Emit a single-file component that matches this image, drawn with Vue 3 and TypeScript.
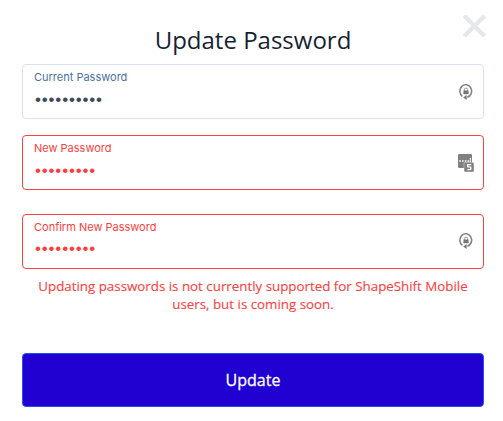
<script setup lang="ts">
interface Field {
  id: string
  label: string
  length: number
  invalid: boolean
  icon: 'lock' | 'manager'
}

const fields: Field[] = [
  { id: 'current', label: 'Current Password', length: 10, invalid: false, icon: 'lock' },
  { id: 'new', label: 'New Password', length: 9, invalid: true, icon: 'manager' },
  { id: 'confirm', label: 'Confirm New Password', length: 9, invalid: true, icon: 'lock' },
]
</script>

<template>
  <main class="dialog">
    <button class="close" aria-label="Close">
      <svg width="23" height="22" viewBox="0 0 23 22">
        <path d="M2.7 2.2 20.3 19.8M20.3 2.2 2.7 19.8" fill="none" stroke="#e6e7e9" stroke-width="4.2" stroke-linecap="square" />
      </svg>
    </button>
    <h1 class="title">Update Password</h1>
    <div v-for="f in fields" :key="f.id" class="field" :class="[f.id, { invalid: f.invalid }]">
      <div class="text">
        <span class="label">{{ f.label }}</span>
        <span class="value">{{ '•'.repeat(f.length) }}</span>
      </div>
      <svg v-if="f.icon === 'lock'" class="icon" width="18" height="18" viewBox="0 0 18 18">
        <path d="M5.4 13.4A5.9 6.4 0 1 1 10.3 14.3" fill="none" stroke="#858585" stroke-width="1.6" />
        <path d="M9.6 12v5L6.2 14.5z" fill="#777" />
        <path d="M7.4 8V6.6a1.6 1.6 0 0 1 3.2 0V8" fill="none" stroke="#999" stroke-width="1" />
        <rect x="6.4" y="7.4" width="5.2" height="3.8" rx=".4" fill="#777" />
      </svg>
      <svg v-else class="icon" width="18" height="18" viewBox="0 0 18 18">
        <rect x="1" y="0" width="14" height="14" rx="1.2" fill="#808080" />
        <path d="M2.2 7h1.6M5 7h1.6M7.8 7h1.6M10.6 7h1.4" stroke="#fff" stroke-width="1.6" />
        <path d="M13.3 4v4" stroke="#fff" stroke-width="1" />
        <rect x="7" y="8.4" width="10" height="9.6" rx="1.2" fill="#808080" stroke="#fff" stroke-width=".4" />
        <path d="M14.2 10.6h-3.5v2.2h2c1.8 0 1.8 2.9 0 2.9h-2.3" fill="none" stroke="#fff" stroke-width="1.3" />
      </svg>
    </div>
    <p class="error">Updating passwords is not currently supported for ShapeShift Mobile<br>users, but is coming soon.</p>
    <button class="submit">Update</button>
  </main>
</template>

<style>
body {
  background: #fff;
}
</style>

<style scoped>
.dialog {
  position: relative;
  box-sizing: border-box;
  width: 503px;
  height: 421px;
  padding: 22px 19px 0 22px;
  display: flex;
  flex-direction: column;
  overflow: hidden;
  font-family: "Open Sans", "Noto Sans", sans-serif;
}
.close {
  position: absolute;
  top: 15px;
  right: 17px;
  padding: 0;
  border: 0;
  background: none;
  line-height: 0;
}
.title {
  margin: 0 0 6px;
  height: 36px;
  line-height: 36px;
  text-align: center;
  font-size: 24px;
  font-weight: 400;
  color: #171f35;
}
.field {
  box-sizing: border-box;
  height: 55px;
  flex: none;
  display: flex;
  justify-content: space-between;
  align-items: center;
  padding: 0 8px 0 11px;
  border: 1px solid #d9e2ec;
  border-radius: 4px;
  color: #414856;
}
.field.current {
  margin-bottom: 16px;
}
.field.new {
  margin-bottom: 24px;
}
.field.invalid {
  border-color: #fa4143;
  color: #fb3e40;
}
.text {
  align-self: flex-start;
  display: flex;
  flex-direction: column;
  padding-top: 4px;
}
.label {
  font-family: Inter, sans-serif;
  font-size: 11px;
  line-height: 16px;
  color: #4a70a6;
}
.invalid .label {
  color: inherit;
}
.value {
  padding-top: 3px;
  padding-left: 1px;
  font-family: "Liberation Sans", sans-serif;
  font-size: 17px;
  line-height: 24px;
  letter-spacing: 0.83px;
}
.confirm .value {
  padding-top: 2px;
}
.confirm .icon {
  margin-bottom: 2px;
}
.error {
  margin: 8px 0 40px;
  text-align: center;
  font-size: 13.34px;
  line-height: 18px;
  color: #fb3e40;
  -webkit-text-stroke: 0.1px currentColor;
}
.submit {
  box-sizing: border-box;
  height: 54px;
  flex: none;
  padding: 0;
  border: 1px solid #2850e8;
  border-radius: 4px;
  background: #2100d2;
  color: #fff;
  font-family: inherit;
  font-size: 16px;
  -webkit-text-stroke: 0.3px currentColor;
}
</style>
